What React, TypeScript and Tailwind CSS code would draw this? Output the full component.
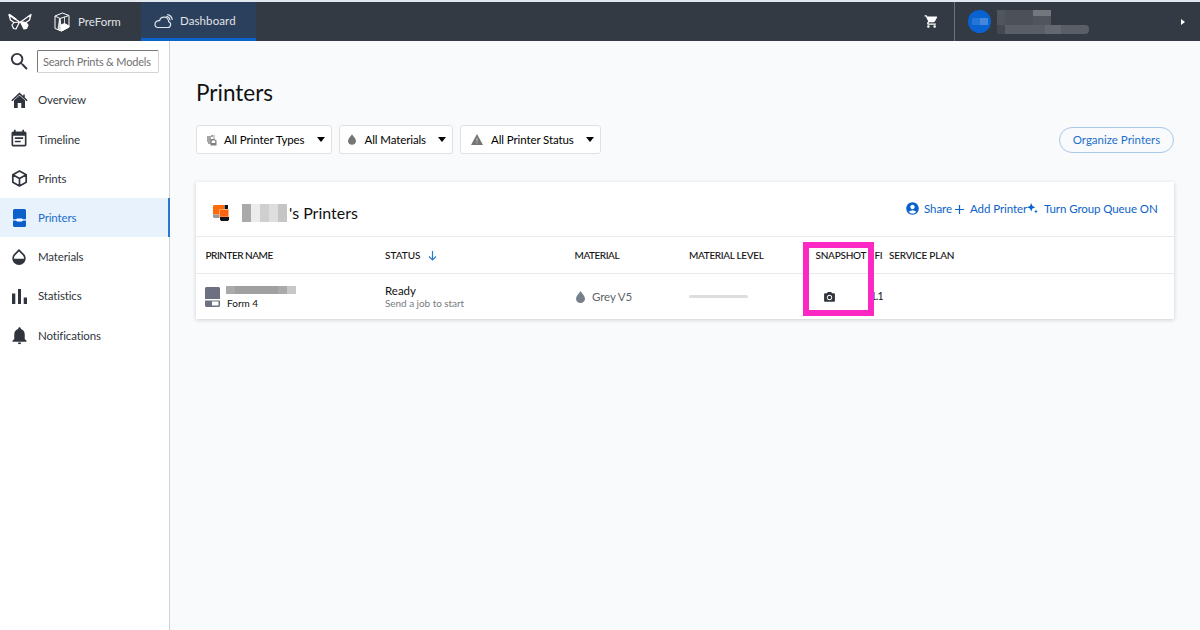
import type { ReactNode } from 'react';
import {
  MdAccountCircle,
  MdCameraAlt,
  MdEventNote,
  MdNotifications,
  MdOpacity,
  MdSearch,
  MdShoppingCart,
} from 'react-icons/md';

function ButterflyLogo() {
  return (
    <svg className="h-[17px] w-6" viewBox="0 0 24 17" fill="none" stroke="white" strokeWidth="1.2" strokeLinejoin="round">
      <path d="M11.500 9 1 1.500 2.500 7 6 9.500ZM11.500 9 6 9.500 4 12l1.500 3.500 2.500.5Z" />
      <path d="m1 1.500 7 5" strokeWidth="2" />
      <path d="M12.500 9 23 1.500 21.500 7 18 9.500ZM23 1.500l-7 5" />
      <path d="m12.500 9 5.500.5 2 2.500-1.500 3.500-2.500.5Z" fill="white" />
    </svg>
  );
}

function PreFormIcon() {
  return (
    <svg className="h-5 w-4" viewBox="0 0 16 20" fill="none" stroke="white" strokeWidth="1" strokeLinejoin="round">
      <path d="M1 4 8.500 1 15 3.500V15l-7.500 4L1 16.500ZM1 4l5 2.500L15 3.500M6 6.500 7.500 19" />
      <path d="m7 13 3.500-1.500L15 14v1l-7.500 4Z" fill="white" />
      <path d="M5.500 7 4 17.500l3.500 1.500ZM10.500 5v8" fill="#cfd2d6" strokeWidth="0.8" />
    </svg>
  );
}

function CloudIcon() {
  return (
    <svg className="h-[15px] w-[19px]" viewBox="0 0 19 15" fill="none" stroke="#dfe6ee" strokeWidth="1.2" strokeLinecap="round">
      <path d="M4 13.500h9.500a3 3 0 0 0 1.200-5.800C14.500 5 12.300 3.200 10 3.200 7.800 3.200 6.100 4.500 5.600 6.700 3 6.500 1 8 1 10.300c0 1.900 1.300 3.200 3 3.200Z" />
      <path d="M12.700 2.400c1.700.4 2.900 1.700 3.300 3.500M13.700.7c2.300.6 4 2.300 4.500 4.700" />
    </svg>
  );
}

function HomeIcon() {
  return (
    <svg className="h-[17px] w-[17px]" viewBox="0 0 17 17" fill="#30353d">
      <path d="M8.500 3.500 14 8.300V16h-3.700v-5H6.700v5H3V8.300Z" />
      <path d="M.8 8.800 8.500 1.600l7.700 7.200M13 2.500v3" fill="none" stroke="#30353d" strokeWidth="1.500" />
    </svg>
  );
}

function CubeIcon() {
  return (
    <svg className="h-[17px] w-[17px]" viewBox="0 0 17 17" fill="none" stroke="#30353d" strokeWidth="1.700" strokeLinejoin="round">
      <path d="m8.500 1 6.700 3.700v7.600L8.500 16l-6.700-3.700V4.700ZM1.800 4.700l6.700 3.800 6.700-3.800M8.500 8.500V16" />
    </svg>
  );
}

function PrinterIcon() {
  return (
    <svg className="h-[18px] w-[13px]" viewBox="0 0 13 18">
      <path d="M1.500 0h10A1.500 1.500 0 0 1 13 1.500V10H0V1.500A1.500 1.500 0 0 1 1.500 0ZM0 12h13v4.500a1.500 1.500 0 0 1-1.500 1.500h-10A1.500 1.500 0 0 1 0 16.500Z" fill="#0b61c9" />
      <path d="M0 10.500h13V12H0Z" fill="#82b2e8" />
      <path d="M4 9.500h5l1 1.200-1 1.800H4l-1-1.800Z" fill="white" />
    </svg>
  );
}

function StatisticsIcon() {
  return (
    <svg className="h-[15px] w-[15px]" viewBox="0 0 15 15" fill="#30353d">
      <path d="M0 4.500h3.300V15H0ZM6 0h3v15H6ZM11.700 8.500H15V15h-3.300Z" />
    </svg>
  );
}

function Drop({ className }: { className: string }) {
  return (
    <svg className={className} viewBox="0 0 9 12" fill="currentColor">
      <path d="M4.500 0C6 2.500 9 5 9 7.700 9 10.200 7 12 4.500 12S0 10.200 0 7.700C0 5 3 2.500 4.500 0Z" />
    </svg>
  );
}

function PrinterTypesIcon() {
  return (
    <svg className="h-3 w-[10px]" viewBox="0 0 10 12">
      <path d="M0 2h4V1h2v2H4v7H1V8H0Z" fill="#a5a5a5" />
      <path d="M3.500 5h4l2 1.500v5h-6Z" fill="#808080" />
      <path d="M4.700 6.500h3.500v2.500H4.700Z" fill="white" />
      <path d="M7 .8V5" stroke="#999" />
    </svg>
  );
}

function WarningIcon() {
  return (
    <svg className="h-[11px] w-3" viewBox="0 0 12 11">
      <path d="M6 0 12 11H0Z" fill="#757575" />
      <path d="M6 4v3.500M6 8.500v1" stroke="#c9c9c9" />
    </svg>
  );
}

function Caret() {
  return (
    <svg className="h-[5px] w-2" viewBox="0 0 8 5">
      <path d="M0 0h8L4 5Z" fill="black" />
    </svg>
  );
}

const navItems: { label: string; icon: ReactNode; active?: boolean }[] = [
  { label: 'Overview', icon: <HomeIcon /> },
  { label: 'Timeline', icon: <MdEventNote size={20} /> },
  { label: 'Prints', icon: <CubeIcon /> },
  { label: 'Printers', icon: <PrinterIcon />, active: true },
  { label: 'Materials', icon: <MdOpacity size={20} /> },
  { label: 'Statistics', icon: <StatisticsIcon /> },
  { label: 'Notifications', icon: <MdNotifications size={21} /> },
];

const filters = [
  { label: 'All Printer Types', icon: <PrinterTypesIcon />, size: 'w-[136px] pl-[10px]', gap: 'w-[17px]' },
  { label: 'All Materials', icon: <Drop className="h-[11px] w-2" />, size: 'w-[114px] pl-[7.5px]', gap: 'w-[17px]' },
  { label: 'All Printer Status', icon: <WarningIcon />, size: 'w-[141px] pl-[10px]', gap: 'w-5' },
];

function Header() {
  return (
    <header className="flex h-[41px] shrink-0 border-t-2 border-[#e1e8f0] bg-[#343a43] text-[11.5px] text-[#e0e3e7]">
      <div className="flex w-[39px] items-center justify-center"><ButterflyLogo /></div>
      <div className="flex w-[102px] items-center gap-[8px] pl-[15px]">
        <PreFormIcon />
        <span>PreForm</span>
      </div>
      <div className="flex w-[115px] items-center gap-[7px] border-b-[3px] border-[#0b62c8] bg-[#2b405c] pt-[2px] pl-[13px]">
        <CloudIcon />
        <span className="tracking-[0.1px]">Dashboard</span>
      </div>
      <MdShoppingCart size={15} className="mt-3 mr-[15px] ml-auto text-white" />
      <div className="flex w-[246px] items-center">
        <div className="h-full w-px bg-[#6c7179]" />
        <div className="ml-[13px] flex size-[23px] items-center justify-center rounded-full bg-[#0862cf]">
          <div className="flex h-[7px] w-4">
            <div className="w-2 bg-[#2675d5]" />
            <div className="w-2 bg-[#4388dd]" />
          </div>
        </div>
        <div className="ml-[6px] flex w-[93px] flex-col">
          <div className="flex h-[15px] w-[54px]">
            <div className="w-2 bg-[#50555e]" />
            <div className="w-7 bg-[#4b5059]" />
            <div className="w-[18px] bg-[#50555e]">
              <div className="h-[6px] bg-[#73777e]" />
            </div>
          </div>
          <div className="flex h-[9px]">
            <div className="w-2 bg-[#434851]" />
            <div className="w-10 bg-[#5a5f67]" />
            <div className="w-4 bg-[#646870]" />
            <div className="w-7 rounded-r-sm bg-[#5a5f67]" />
          </div>
        </div>
        <svg className="mr-[15px] ml-auto h-[6px] w-1" viewBox="0 0 4 6"><path d="m0 0 4 3-4 3Z" fill="white" /></svg>
      </div>
    </header>
  );
}

function Sidebar() {
  return (
    <aside className="w-[170px] shrink-0 border-r border-[#cfd2d6] bg-white">
      <div className="flex h-[39px] items-center pt-px">
        <MdSearch size={23} className="ml-2 text-[#30353d]" />
        <div className="ml-[6px] flex h-[23px] w-[122px] items-center rounded-[2px] border border-[#d4d4d4] border-t-[#777] border-l-[#777] pt-[2px] pl-[5px] text-[11px] text-[#707070]">
          <span className="tracking-[-0.2px] whitespace-nowrap">Search Prints &amp; Models</span>
        </div>
      </div>
      <nav>
        {navItems.map((item) => (
          <div
            key={item.label}
            className={
              'flex h-[39.2px] items-center pt-px text-[11.5px] tracking-[-0.14px] ' +
              (item.active ? '-mr-px border-r-2 border-[#2878d0] bg-[#e7f2fc] text-[#1d6fc9]' : 'text-[#30353d]')
            }
          >
            <span className="flex w-[38px] justify-center">{item.icon}</span>
            <span>{item.label}</span>
          </div>
        ))}
      </nav>
    </aside>
  );
}

function GroupHeader() {
  return (
    <div className="flex h-[55px] items-center border-b border-[#e7e9eb]">
      <svg className="mt-[7px] ml-[17px] h-4 w-4" viewBox="0 0 16 16">
        <path d="M1 0h10v9.500H0V1Z" fill="#ff6a0a" />
        <path d="M0 9.500h6.500V13H1l-1-1Z" fill="#999" />
        <path d="M11.500 0H15v4h-3.500Z" fill="#141414" />
        <path d="M6.500 4.500h9V12h-9Z" fill="#ff6410" stroke="#ffb27d" strokeWidth="0.8" />
        <path d="M7 12h9v2.500L15 16H8l-1-1.500Z" fill="#141414" />
      </svg>
      <div className="mt-2 ml-[13px] flex h-[18px] w-[45px]">
        <div className="w-[9px] bg-[#aaa]" />
        <div className="w-[9px] bg-[#ececec]" />
        <div className="w-[9px] bg-[#cfcfcf]" />
        <div className="w-[9px] bg-[#dedede]" />
        <div className="w-[9px] bg-[#c5c5c5]" />
      </div>
      <h2 className="mt-2 ml-[2px] text-[16px] whitespace-nowrap text-[#111]">'s Printers</h2>
      <div className="mr-[16px] ml-auto flex items-center text-[11.5px] tracking-[-0.08px] whitespace-nowrap text-[#0b62c8]">
        <MdAccountCircle size={15} className="-mt-[2px]" />
        <span className="ml-1 w-[31px]">Share</span>
        <svg className="h-[9px] w-[9px]" viewBox="0 0 9 9"><path d="M4.500 0v9M0 4.500h9" stroke="currentColor" strokeWidth="1.200" /></svg>
        <span className="ml-[6px] w-[57px]">Add Printer</span>
        <svg className="-mt-[2px] h-[11px] w-[11px]" viewBox="0 0 11 11" fill="currentColor">
          <path d="m4.200 0 1.200 3 3 1.200-3 1.200-1.200 3L3 5.400 0 4.200 3 3ZM9 6.500l.6 1.400 1.400.6-1.400.6L9 10.500l-.6-1.400L7 8.500l1.400-.6Z" />
        </svg>
        <span className="ml-[6px] w-[114px] tracking-[-0.08px]">Turn Group Queue ON</span>
      </div>
    </div>
  );
}

function PrinterTable() {
  return (
    <section className="relative mt-[28px] h-[137px] w-[978px] bg-white text-[#111] shadow-[0_1px_4px_rgba(30,40,50,0.2)]">
      <GroupHeader />
      <div className="flex h-[37px] items-center border-b border-[#e7e9eb] pl-[9.5px] text-[10px] font-medium whitespace-nowrap">
        <span className="w-[179.5px] tracking-[-0.48px]">PRINTER NAME</span>
        <span className="flex w-[189.5px] items-center gap-[7px]">
          STATUS
          <svg className="mt-px h-[10px] w-[9px] text-[#287bd0]" viewBox="0 0 9 10" fill="none" stroke="currentColor" strokeWidth="1.200"><path d="M4.500 0v9M1 5.500 4.500 9 8 5.500" /></svg>
        </span>
        <span className="w-[114.5px] tracking-[-0.45px]">MATERIAL</span>
        <span className="w-[126.500px] tracking-[-0.33px]">MATERIAL LEVEL</span>
        <span className="w-[59px] tracking-[-0.25px]">SNAPSHOT</span>
        <span className="w-[14.5px] tracking-[-0.3px]">FI</span>
        <span className="tracking-[-0.2px]">SERVICE PLAN</span>
      </div>
      <div className="flex h-[45px] items-center pl-[9px]">
        <svg className="h-5 w-[15px]" viewBox="0 0 15 20" fill="#6c7081">
          <path d="M1 0h13l1 1v11H0V1ZM0 13.500h15V19l-1 1H1l-1-1Z" />
          <path d="M7 14.500h6.500V18.500H7Z" fill="white" />
        </svg>
        <div className="mt-[2px] ml-[6px] w-[159px]">
          <div className="flex h-[8px] w-[70px]">
            <div className="w-[9px] bg-[#aaa]" />
            <div className="w-[43px] bg-[#a0a0a0]" />
            <div className="w-[9px] bg-[#aaa]" />
            <div className="w-[9px] bg-[#c8c8c8]" />
          </div>
          <div className="mt-[3px] -mb-px ml-px text-[10px] leading-[13px]">Form 4</div>
        </div>
        <div className="w-[191px]">
          <div className="text-[11.5px] leading-[13px]">Ready</div>
          <div className="text-[10px] leading-[13px] tracking-[-0.05px] text-[#777b80]">Send a job to start</div>
        </div>
        <Drop className="h-3 w-[9px] text-[#75808a]" />
        <span className="ml-[7px] w-[97px] text-[11.5px] tracking-[-0.1px] text-[#60656a]">Grey V5</span>
        <div className="h-[3px] w-[59px] rounded-full bg-[#dcdddd]" />
        <MdCameraAlt size={13} className="mt-px ml-[75px] text-[#30353d]" />
        <span className="ml-[34.5px] text-[10.5px] tracking-[-0.8px]">1.1</span>
      </div>
      {/* Snapshot column highlight */}
      <div className="absolute top-[60px] left-[607px] h-[74px] w-[71px] border-6 border-[#fb28c3]" />
    </section>
  );
}

export default function App() {
  return (
    <div className="flex h-[630px] w-[1200px] flex-col overflow-hidden bg-[#f8fafc] font-['Lato',sans-serif]">
      <Header />
      <div className="flex grow">
        <Sidebar />
        <main className="grow pl-[26px]">
          <h1 className="mt-[37px] text-[22.5px] leading-[30px] text-[#111]">Printers</h1>
          <div className="mt-[17px] flex items-center gap-[7px]">
            {filters.map((filter) => (
              <button
                key={filter.label}
                className={'flex h-[29px] items-center rounded-[3px] border border-[#dfe2e5] bg-white pr-[6.5px] text-[11.5px] tracking-[-0.1px] whitespace-nowrap text-black ' + filter.size}
              >
                <span className={'flex text-[#757575] ' + filter.gap}>{filter.icon}</span>
                {filter.label}
                <span className="ml-auto"><Caret /></span>
              </button>
            ))}
            <button className="mr-[26px] ml-auto h-[26px] w-[115px] rounded-full border border-[#a9c8e8] text-[11.5px] whitespace-nowrap text-[#1d6fc9]">
              Organize Printers
            </button>
          </div>
          <PrinterTable />
        </main>
      </div>
    </div>
  );
}
